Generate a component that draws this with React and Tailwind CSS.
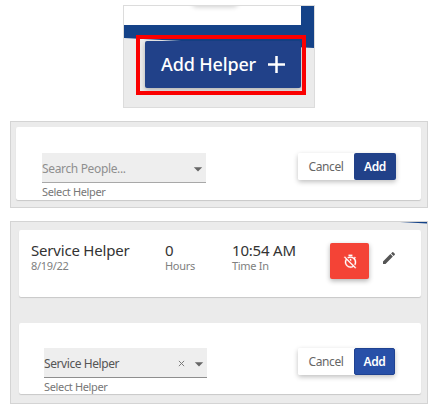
import React from "react";
import { MdArrowDropDown } from "react-icons/md";

function TimerOffIcon({ className }) {
  return (
    <svg viewBox="0 0 24 24" fill="currentColor" stroke="currentColor" strokeWidth="0.4" className={className}>
      <path d="M12 20A7 7 0 0 1 5 13C5 11.72 5.35 10.5 5.95 9.5L15.5 19.04C14.5 19.65 13.28 20 12 20M3 4L1.75 5.27L4.5 8.03C3.55 9.45 3 11.16 3 13A9 9 0 0 0 12 22C13.84 22 15.55 21.45 17 20.5L19.5 23L20.75 21.73L13.04 14L3 4M11 9.44L13 11.44V8H11M15 1H9V3H15M19.04 4.55L17.62 5.97C16.07 4.74 14.12 4 12 4C10.17 4 8.47 4.55 7.05 5.5L8.5 6.94C9.53 6.35 10.73 6 12 6A7 7 0 0 1 19 13C19 14.27 18.65 15.47 18.06 16.5L19.5 17.94C20.45 16.53 21 14.83 21 13C21 10.88 20.26 8.93 19.03 7.39L20.45 5.97L19.04 4.55Z" />
    </svg>
  );
}

function PencilIcon({ className }) {
  return (
    <svg viewBox="0 0 24 24" fill="currentColor" className={className}>
      <path d="M20.71 7.04C21.1 6.65 21.1 6 20.71 5.63L18.37 3.29C18 2.9 17.35 2.9 16.96 3.29L15.12 5.12L18.87 8.87M3 17.25V21H6.75L17.81 9.93L14.06 6.18L3 17.25Z" />
    </svg>
  );
}

function HelperSelect({ value, selected, className }) {
  return (
    <div className={className}>
      <div
        className={`flex h-[30px] items-center border-b bg-[#eeeeee] text-[12px] leading-[16px] ${
          selected ? "border-[#8e8e8e] tracking-[-0.42px] text-[#555]" : "border-[#a8a8a8] tracking-[-0.35px] text-[#8f8f8f]"
        }`}
      >
        <span className="flex-1 whitespace-nowrap pt-[2px]">{value}</span>
        {selected && (
          <svg viewBox="0 0 8 8" className="mr-[4px] mt-[2px] h-[7px] w-[7px]" stroke="#777" strokeWidth="1.1">
            <path d="M1 1 7 7M7 1 1 7" />
          </svg>
        )}
        <MdArrowDropDown className="-mr-[2px] mt-[3px] h-[20px] w-[20px] text-[#666]" />
      </div>
      <div className="mt-[2px] whitespace-nowrap text-[11px] leading-[14px] tracking-[-0.35px] text-[#777]">Select Helper</div>
    </div>
  );
}

function Actions({ active }) {
  return (
    <div className="flex h-[27px] rounded-[2px] text-[12px] leading-[16px] tracking-[-0.4px] shadow-[0_2px_5px_rgba(0,0,0,0.25)]">
      <button className="w-[56px] rounded-l-[2px] bg-white text-[#666]">Cancel</button>
      <button
        className={`rounded-[2px] font-semibold text-white ${
          active ? "w-[41px] border border-[#1f4291] bg-[#2850a8]" : "w-[42px] bg-[#214189]"
        }`}
      >
        Add
      </button>
    </div>
  );
}

function Stat({ title, label, className }) {
  return (
    <div className={`whitespace-nowrap ${className}`}>
      <div className="text-[15px] leading-[15px] tracking-[-0.2px] text-[#333]">{title}</div>
      <div className="text-[11px] leading-[15px] tracking-[-0.3px] text-[#808080]">{label}</div>
    </div>
  );
}

export default function App() {
  return (
    <div className="flex h-[411px] w-[436px] flex-col overflow-hidden bg-white pt-[5px] font-['Noto_Sans',sans-serif]">
      <section className="relative ml-[123px] h-[103px] w-[192px] overflow-hidden border border-[#dcdcdc] bg-[#ebebeb]">
        <svg className="absolute left-0 top-0 h-[101px] w-[190px]" viewBox="0 0 190 101">
          <path d="M0 0H190V42L0 32Z" fill="#144288" />
        </svg>
        <div className="relative h-[19px] w-[177px] overflow-hidden bg-white">
          <div className="ml-[68px] -mt-[9px] h-[9px] w-[46px] rounded-full shadow-[0_1px_5px_rgba(0,0,0,0.2)]" />
        </div>
        <button className="relative ml-[21px] mt-[16px] flex h-[47px] w-[156px] items-center rounded-[2px] bg-[#214189] pb-[2px] pl-[16px] text-[18px] font-medium leading-[24px] tracking-[-0.15px] text-white shadow-[0_2px_5px_rgba(0,0,0,0.25)]">
          <span className="w-[96px] whitespace-nowrap text-left">Add Helper</span>
          <svg className="ml-[11px] mt-[2px] h-[17px] w-[17px]" viewBox="0 0 17 17" stroke="white" strokeWidth="2.5">
            <path d="M8.5 0V17M0 8.5H17" />
          </svg>
        </button>
        <div className="absolute left-[12px] top-[29px] h-[60px] w-[170px] border-4 border-[#fa0000]" />
      </section>

      <section className="ml-[10px] mt-[13px] h-[87px] w-[418px] border border-[#d4d4d4] bg-[#ebebeb] pl-[5px] pt-[5px]">
        <div className="flex h-[73px] w-[405px] items-start rounded-[2px] bg-white pl-[26px] pt-[26px] shadow-[0_1px_1px_rgba(0,0,0,0.15)]">
          <HelperSelect value="Search People..." className="w-[164px]" />
          <div className="ml-[92px]">
            <Actions />
          </div>
        </div>
      </section>

      <section className="relative ml-[10px] mt-[13px] h-[183px] w-[418px] border border-[#d4d4d4] bg-[#ebebeb] pl-[8px] pt-[8px]">
        <svg className="absolute right-0 top-0 h-[3px] w-[27px]" viewBox="0 0 27 3">
          <path d="M0 0H27V1.5Z" fill="#144288" />
        </svg>
        <div className="flex h-[67px] w-[402px] items-start rounded-[2px] bg-white pl-[12px] pt-[13px] shadow-[0_1px_1px_rgba(0,0,0,0.15)]">
          <Stat title="Service Helper" label="8/19/22" className="w-[134px]" />
          <Stat title="0" label="Hours" className="w-[67px]" />
          <Stat title="10:54 AM" label="Time In" className="w-[98px]" />
          <button className="flex h-[36px] w-[39px] items-center justify-center rounded-[2px] bg-[#f44336] text-white shadow-[0_2px_5px_rgba(0,0,0,0.3)]">
            <TimerOffIcon className="ml-[1px] h-[15px] w-[15px]" />
          </button>
          <PencilIcon className="ml-[12px] mt-[7px] h-[16px] w-[16px] text-[#555]" />
        </div>
        <div className="mt-[26px] flex h-[71px] w-[402px] items-start rounded-[2px] bg-white pl-[25px] pt-[25px] shadow-[0_1px_1px_rgba(0,0,0,0.15)]">
          <HelperSelect value="Service Helper" selected className="w-[163px]" />
          <div className="ml-[91px]">
            <Actions active />
          </div>
        </div>
      </section>
    </div>
  );
}
